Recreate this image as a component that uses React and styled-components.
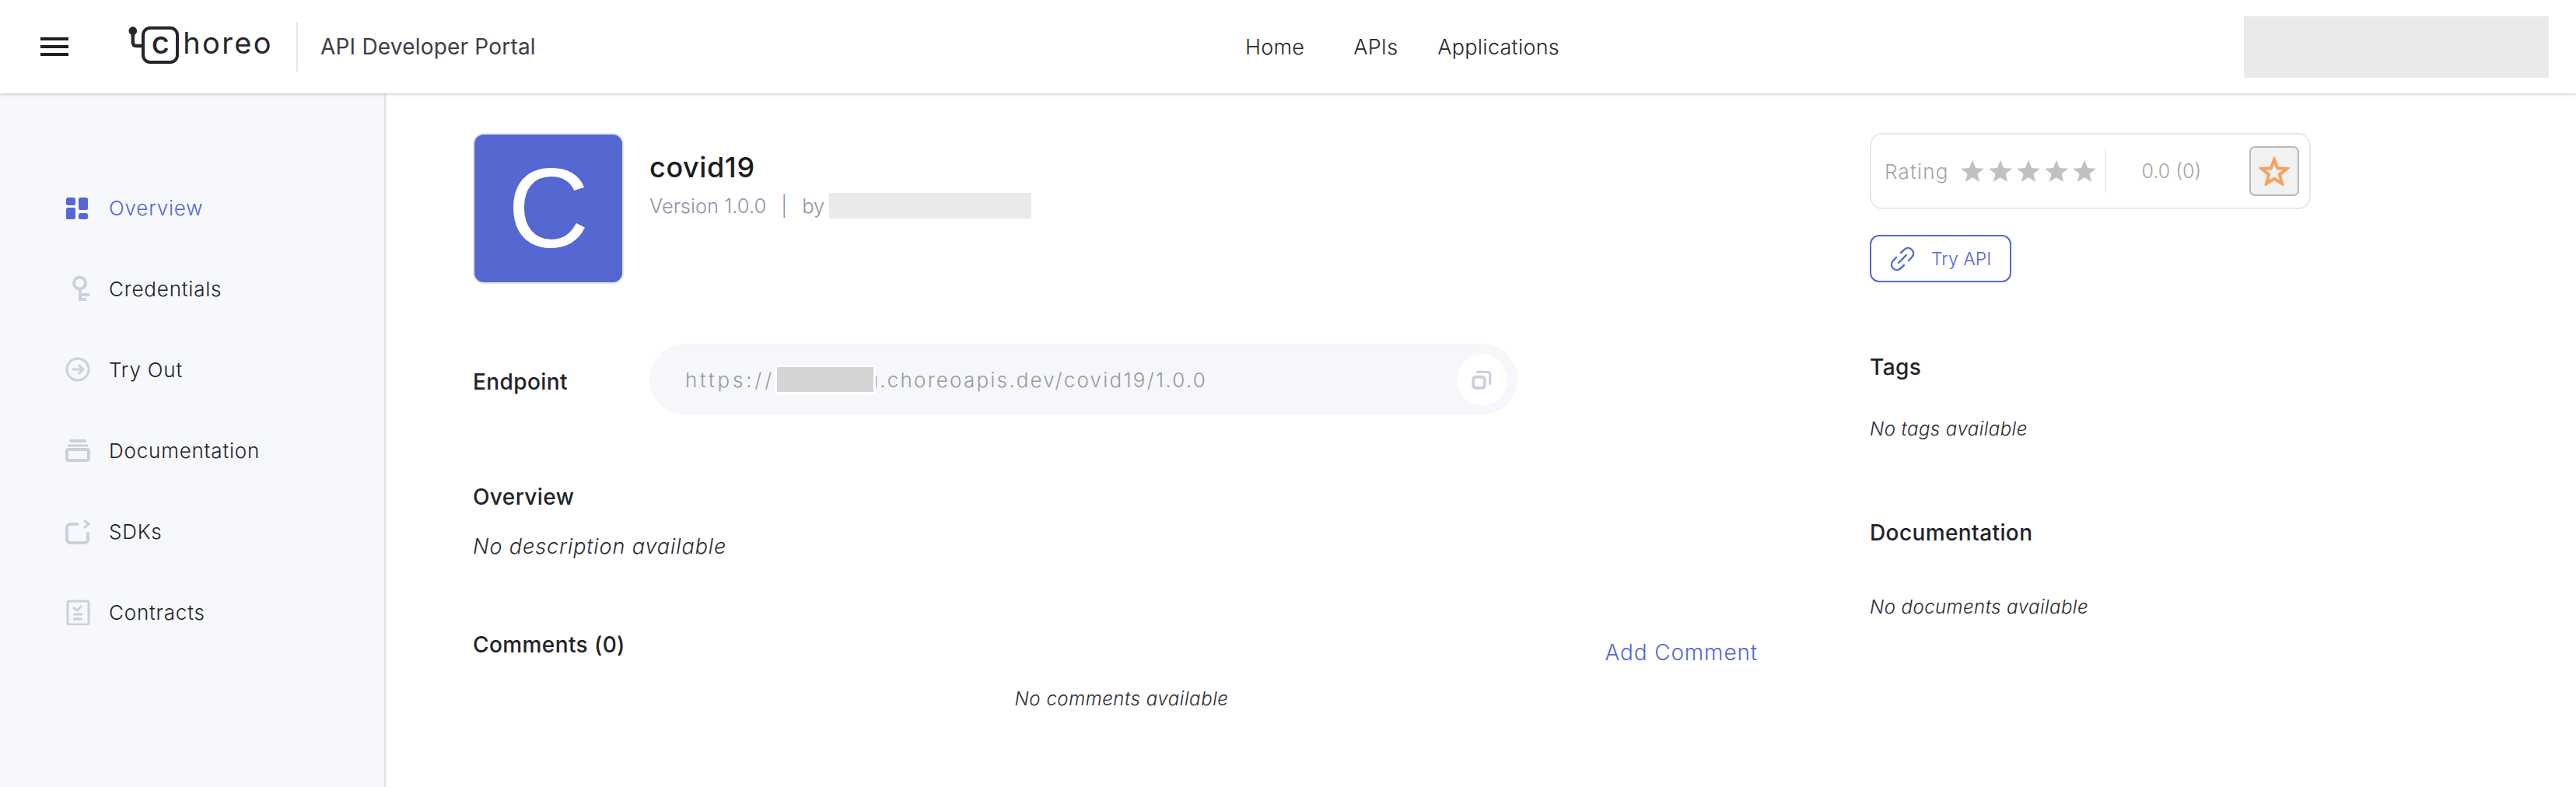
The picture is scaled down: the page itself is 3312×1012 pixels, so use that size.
import React from "react";
import styled, { createGlobalStyle } from "styled-components";

const GlobalStyle = createGlobalStyle`
  html, body {
    margin: 0;
    padding: 0;
    background: #ffffff;
  }
  body {
    font-family: "Inter", "Liberation Sans", sans-serif;
    color: #1d1f24;
  }
  * {
    box-sizing: border-box;
  }
`

const Page = styled.div`
  width: 3312px;
  height: 1012px;
  display: flex;
  flex-direction: column;
  overflow: hidden;
`
const Header = styled.header`
  height: 120px;
  flex: none;
  display: flex;
  align-items: center;
  padding: 0 35px 0 52px;
  background: #ffffff;
  box-shadow: 0 1px 4px rgba(120, 120, 145, 0.45);
  position: relative;
  z-index: 2;
`
const HeaderLeft = styled.div`
  width: 1549px;
  display: flex;
  align-items: center;
`
const MenuButton = styled.div`
  width: 36px;
  height: 24px;
  display: flex;
  flex-direction: column;
  justify-content: space-between;
  margin-right: 77px;

  span {
    display: block;
    height: 4px;
    background: #1f1f1f;
  }
`
const Logo = styled.div`
  width: 186px;
  height: 54px;
  display: flex;
  align-items: flex-start;
  color: #26262b;
`
const LogoBox = styled.span`
  width: 49px;
  height: 48px;
  margin-top: 1px;
  padding-bottom: 7px;
  border: 4.5px solid #26262b;
  border-radius: 11px;
  display: flex;
  align-items: center;
  justify-content: center;
  font-size: 40px;
  font-weight: 500;
  line-height: 36px;
`
const LogoWord = styled.span`
  margin: 3px 0 0 5px;
  font-size: 38px;
  line-height: 38px;
  letter-spacing: 2.4px;
`
const PortalName = styled.div`
  margin-left: 30px;
  padding-left: 29px;
  height: 64px;
  display: flex;
  align-items: center;
  border-left: 2px solid #e6e6e6;
  font-size: 28px;
  letter-spacing: 0.2px;
  color: #3c3d46;
`
const TopNav = styled.nav`
  display: flex;
  align-items: center;
  gap: 51px;

  a:first-child {
    margin-right: 12px;
  }
`
const TopNavItem = styled.a`
  font-size: 27px;
  letter-spacing: 0.25px;
  font-weight: 350;
  color: #26272b;
`
const UserBlock = styled.div`
  margin-left: auto;
  width: 392px;
  height: 79px;
  background: #eaeaea;
`
const Body = styled.div`
  flex: 1;
  display: flex;
  min-height: 0;
`
const Sidebar = styled.aside`
  width: 496px;
  flex: none;
  background: #f7f8fc;
  border-right: 2px solid #e3e3e8;
  padding: 122px 0 0 84px;
  display: flex;
  flex-direction: column;
  gap: 54px;
`
const SideItem = styled.a`
  height: 50px;
  display: flex;
  align-items: center;
  font-size: 26px;
  letter-spacing: 0.8px;
  color: ${(p) => (p.$active ? "#5567d5" : "#222428")};
  font-weight: ${(p) => (p.$active ? 300 : 350)};
`
const SideIcon = styled.span`
  width: 56px;
  flex: none;
  display: flex;

  svg {
    display: block;
  }
`
const Content = styled.main`
  flex: 1;
  display: grid;
  grid-template-columns: 1796px 1fr;
  padding: 51px 0 0 112px;
`
const LeftColumn = styled.section`
  width: 1652px;
  display: flex;
  flex-direction: column;
`
const ApiHead = styled.div`
  display: flex;
  gap: 33px;
`
const Avatar = styled.div`
  width: 194px;
  height: 194px;
  border: 2px solid #e4e6f4;
  border-radius: 14px;
  background: #5567d1;
  color: #ffffff;
  display: flex;
  align-items: center;
  justify-content: center;
  font-family: "Liberation Sans", sans-serif;
  font-size: 145px;
`
const ApiTitle = styled.h1`
  margin: 22px 0 0;
  font-size: 36px;
  line-height: 44px;
  letter-spacing: 0.6px;
  font-weight: 500;
  color: #1b1d21;
`
const ApiMeta = styled.div`
  margin-top: 9px;
  display: flex;
  align-items: center;
  height: 36px;
  font-size: 25.5px;
  font-weight: 300;
  color: #8f93a8;
`
const MetaBar = styled.span`
  margin: 0 19px;
`
const Redacted = styled.span`
  display: block;
  width: 260px;
  height: 33px;
  margin-left: 6px;
  background: #eaeaea;
`
const EndpointRow = styled.div`
  margin-top: 77px;
  display: flex;
  align-items: center;
`
const SectionLabel = styled.div`
  font-size: 28px;
  letter-spacing: 0.4px;
  font-weight: 450;
  color: #212329;
`
const EndpointLabel = styled(SectionLabel)`
  padding-top: 6px;
`
const EndpointPill = styled.div`
  margin-left: 105px;
  width: 1116px;
  height: 92px;
  border-radius: 46px;
  background: #f6f7fb;
  display: flex;
  align-items: center;
  justify-content: space-between;
  padding: 0 13px 0 46px;
`
const EndpointText = styled.div`
  display: flex;
  align-items: center;
  font-size: 26px;
  font-weight: 300;
  letter-spacing: 2.2px;
  color: #9a9a9a;
`
const UrlScheme = styled.span`
  letter-spacing: 3.8px;
`
const UrlMask = styled.span`
  display: block;
  width: 130px;
  height: 38px;
  border: 3px solid #ffffff;
  background: #d4d4d4;
  margin: 0 -3px 0 0;
  position: relative;
`
const CopyButton = styled.div`
  width: 65px;
  height: 65px;
  border-radius: 50%;
  background: #ffffff;
  display: flex;
  align-items: center;
  justify-content: center;
`
const OverviewBlock = styled.div`
  margin-top: 88px;
  display: flex;
  flex-direction: column;
  gap: 30px;
`
const Muted = styled.div`
  font-size: ${(p) => p.$size || 27}px;
  letter-spacing: ${(p) => p.$spacing || 0.9}px;
  font-style: italic;
  font-weight: 300;
  color: #2b2d33;
`
const CommentsHead = styled.div`
  margin-top: 93px;
  display: flex;
  justify-content: space-between;
  align-items: flex-start;
`
const AddComment = styled.a`
  margin-top: 10px;
  font-size: 28px;
  letter-spacing: 0.85px;
  font-weight: 300;
  color: #5567d5;
`
const NoComments = styled(Muted)`
  margin-top: 28px;
  padding-left: 16px;
  text-align: center;
`
const RightColumn = styled.section`
  display: flex;
  flex-direction: column;
  align-items: flex-start;
`
const RatingBox = styled.div`
  width: 567px;
  height: 98px;
  border: 2px solid #e9e9e9;
  border-radius: 16px;
  display: flex;
  align-items: center;
  padding: 0 13px 0 17px;
`
const RatingLabel = styled.span`
  font-size: 26px;
  letter-spacing: 1.2px;
  font-weight: 300;
  color: #a5a5a5;
`
const Stars = styled.div`
  margin-left: 15px;
  display: flex;
  gap: 6px;
`
const RatingScore = styled.div`
  margin-left: 11px;
  padding-left: 46px;
  height: 56px;
  flex: 1;
  display: flex;
  align-items: center;
  border-left: 2px solid #ececec;
  font-size: 25px;
  font-weight: 300;
  color: #a5a5a5;
`
const RateButton = styled.div`
  width: 64px;
  height: 64px;
  background: #f1f1f1;
  border: 2px solid #b8b8b8;
  border-radius: 7px;
  display: flex;
  align-items: center;
  justify-content: center;
`
const TryButton = styled.a`
  margin-top: 33px;
  width: 182px;
  height: 61px;
  border: 2px solid #5567d5;
  border-radius: 12px;
  display: flex;
  align-items: center;
  padding-left: 24px;
  gap: 21px;
  font-size: 23px;
  font-weight: 300;
  color: #5567d5;
`
const SideHeading = styled(SectionLabel)`
  margin-top: ${(p) => p.$top}px;
`
const SideNote = styled(Muted)`
  margin-top: ${(p) => p.$top}px;
`

const navItems = [
  { label: "Overview", active: true, icon: <OverviewIcon /> },
  { label: "Credentials", icon: <KeyIcon /> },
  { label: "Try Out", icon: <ArrowIcon /> },
  { label: "Documentation", icon: <DocsIcon /> },
  { label: "SDKs", icon: <SdkIcon /> },
  { label: "Contracts", icon: <ContractIcon /> },
]

function OverviewIcon() {
  return (
    <svg width="29" height="29" viewBox="0 0 29 29" fill="#5567d5">
      <rect x="1" y="1" width="12" height="10" rx="2.5" />
      <rect x="17" y="1" width="12" height="16" rx="2.5" />
      <rect x="1" y="14" width="12" height="15" rx="2.5" />
      <rect x="17" y="21" width="12" height="8" rx="2.5" />
    </svg>
  )
}

function KeyIcon() {
  return (
    <svg width="32" height="34" viewBox="0 0 32 34" fill="none" stroke="#cdcfdd" strokeWidth="4">
      <circle cx="18.500" cy="10" r="7.500" />
      <path d="M19 18V31H27M19 25H31" />
    </svg>
  )
}

function ArrowIcon() {
  return (
    <svg width="32" height="32" viewBox="0 0 32 32" fill="none" stroke="#cdcfdd" strokeWidth="3">
      <circle cx="16" cy="16" r="14" />
      <path d="M9 16H23M17 10L23 16L17 22" />
    </svg>
  )
}

function DocsIcon() {
  return (
    <svg width="32" height="30" viewBox="0 0 32 30" fill="none" stroke="#cdcfdd">
      <rect x="2" y="14" width="28" height="14" rx="2" strokeWidth="4" />
      <path d="M3 9H29" strokeWidth="3" />
      <path d="M7 3H25" strokeWidth="4" strokeLinecap="round" />
    </svg>
  )
}

function SdkIcon() {
  return (
    <svg width="32" height="33" viewBox="0 0 32 33" fill="none" stroke="#cdcfdd" strokeWidth="4">
      <path d="M17 7H7Q2 7 2 12V26Q2 31 7 31H24Q29 31 29 26V17" />
      <path d="M24 2L30 7L24 12" strokeWidth="3" />
    </svg>
  )
}

function ContractIcon() {
  return (
    <svg width="32" height="33" viewBox="0 0 32 33" fill="none" stroke="#cdcfdd">
      <rect x="3" y="2" width="27" height="30" rx="2" strokeWidth="3" />
      <path d="M10 10L15 14L21 8" strokeWidth="3" />
      <path d="M10 19H22M10 25H22" strokeWidth="3" />
    </svg>
  )
}

function CopyIcon() {
  return (
    <svg width="26" height="26" viewBox="0 0 24 24" fill="none" stroke="#cdcfdd">
      <rect x="2" y="9" width="13.500" height="13" rx="3" strokeWidth="3.500" />
      <path d="M7 3H19Q22 3 22 6V17" strokeWidth="3" strokeLinecap="round" />
    </svg>
  )
}

function Star({ color }) {
  return (
    <svg width="30" height="28" viewBox="0 0 34 32" fill={color}>
      <path d="M17 0L21.6 11.3L34 12.2L24.5 20L27.5 32L17 25.5L6.5 32L9.5 20L0 12.2L12.4 11.3Z" />
    </svg>
  )
}

function OutlineStar() {
  return (
    <svg width="40" height="38" viewBox="0 0 34 32" fill="none" stroke="#f6a15c" strokeWidth="3.4" strokeLinejoin="miter">
      <path d="M17 3.5L20.6 12.8L30.6 13.5L22.9 19.9L25.4 29.6L17 24.3L8.6 29.6L11.1 19.9L3.4 13.5L13.4 12.8Z" />
    </svg>
  )
}

function LinkIcon() {
  return (
    <svg width="32" height="32" viewBox="0 0 32 32" fill="none" stroke="#5567d5" strokeWidth="2.4" strokeLinecap="round">
      <path d="M14 8L18.5 3.8C21.5 1 25.5 1.5 28 4C30.5 6.500 31 10.500 28.200 13.500L24 18" />
      <path d="M18 24L13.500 28.200C10.500 31 6.500 30.500 4 28C1.500 25.500 1 21.500 3.800 18.500L8 14" />
      <path d="M11 21L21 11" />
    </svg>
  )
}

function LogoStem() {
  return (
    <svg width="18" height="54" viewBox="0 0 18 54" fill="none">
      <path d="M6 8V21Q6 26 11 26H18" stroke="#26262b" strokeWidth="4.500" />
      <circle cx="6" cy="6" r="5.500" fill="#26262b" />
    </svg>
  )
}

export default function App() {
  return (
    <Page>
      <GlobalStyle />
      <Header>
        <HeaderLeft>
          <MenuButton>
            <span />
            <span />
            <span />
          </MenuButton>
          <Logo>
            <LogoStem />
            <LogoBox>c</LogoBox>
            <LogoWord>horeo</LogoWord>
          </Logo>
          <PortalName>API Developer Portal</PortalName>
        </HeaderLeft>
        <TopNav>
          <TopNavItem>Home</TopNavItem>
          <TopNavItem>APIs</TopNavItem>
          <TopNavItem>Applications</TopNavItem>
        </TopNav>
        <UserBlock />
      </Header>
      <Body>
        <Sidebar>
          {navItems.map((item) => (
            <SideItem key={item.label} $active={item.active}>
              <SideIcon>{item.icon}</SideIcon>
              {item.label}
            </SideItem>
          ))}
        </Sidebar>
        <Content>
          <LeftColumn>
            <ApiHead>
              <Avatar>C</Avatar>
              <div>
                <ApiTitle>covid19</ApiTitle>
                <ApiMeta>
                  Version 1.0.0
                  <MetaBar>|</MetaBar>
                  by
                  <Redacted />
                </ApiMeta>
              </div>
            </ApiHead>
            <EndpointRow>
              <EndpointLabel>Endpoint</EndpointLabel>
              <EndpointPill>
                <EndpointText>
                  <UrlScheme>https://</UrlScheme>
                  <UrlMask />
                  ı.choreoapis.dev/covid19/1.0.0
                </EndpointText>
                <CopyButton>
                  <CopyIcon />
                </CopyButton>
              </EndpointPill>
            </EndpointRow>
            <OverviewBlock>
              <SectionLabel>Overview</SectionLabel>
              <Muted>No description available</Muted>
            </OverviewBlock>
            <CommentsHead>
              <SectionLabel>Comments (0)</SectionLabel>
              <AddComment>Add Comment</AddComment>
            </CommentsHead>
            <NoComments $size={24} $spacing={0.55}>No comments available</NoComments>
          </LeftColumn>
          <RightColumn>
            <RatingBox>
              <RatingLabel>Rating</RatingLabel>
              <Stars>
                {[0, 1, 2, 3, 4].map((n) => (
                  <Star key={n} color="#c1c1c1" />
                ))}
              </Stars>
              <RatingScore>0.0 (0)</RatingScore>
              <RateButton>
                <OutlineStar />
              </RateButton>
            </RatingBox>
            <TryButton>
              <LinkIcon />
              Try API
            </TryButton>
            <SideHeading $top={92}>Tags</SideHeading>
            <SideNote $top={48} $size={24} $spacing={0.45}>No tags available</SideNote>
            <SideHeading $top={102}>Documentation</SideHeading>
            <SideNote $top={64} $size={24} $spacing={0.45}>No documents available</SideNote>
          </RightColumn>
        </Content>
      </Body>
    </Page>
  );
}
